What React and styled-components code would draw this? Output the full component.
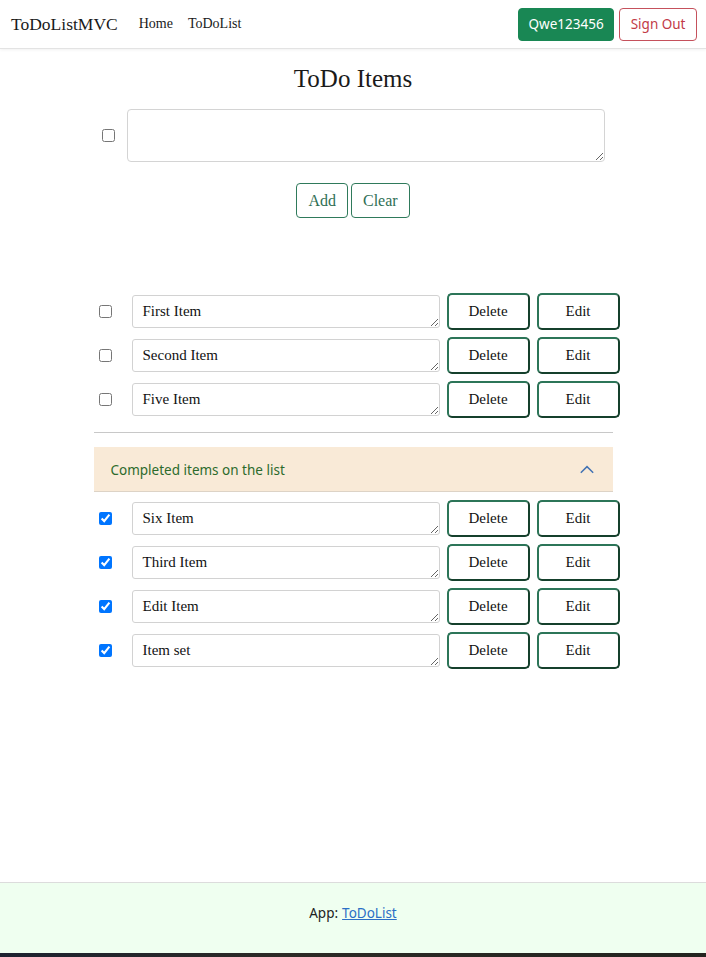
import styled, { createGlobalStyle } from "styled-components";

const GlobalStyle = createGlobalStyle`
  html, body {
    margin: 0;
    padding: 0;
    background: #fff;
  }
  body {
    font-family: "Liberation Serif", "Times New Roman", serif;
    color: #212529;
  }
`;

const Page = styled.div`
  min-height: 100vh;
  display: flex;
  flex-direction: column;
`;

const Navbar = styled.nav`
  height: 48px;
  display: flex;
  align-items: center;
  padding: 0 9px 0 11px;
  border-bottom: 1px solid #e3e3e3;
  box-shadow: 0 1px 3px rgba(0, 0, 0, 0.06);
`;

const Brand = styled.span`
  font-size: 17.5px;
  color: #1a1a1a;
  margin-right: 21px;
`;

const NavLink = styled.span`
  font-size: 14px;
  color: #1a1a1a;
  margin-right: 15px;
`;

const NavRight = styled.div`
  margin-left: auto;
  display: flex;
  gap: 5px;
`;

const NavButton = styled.button`
  height: 33px;
  padding: 0 ${(props) => (props.variant === "danger" ? "10.5px" : "9.5px")};
  border-radius: 4px;
  font-family: "Noto Sans", "Open Sans", sans-serif;
  font-size: 13.5px;
  border: 1px solid ${(props) => (props.variant === "danger" ? "#c5515c" : "#198754")};
  background: ${(props) => (props.variant === "danger" ? "#fff" : "#198754")};
  color: ${(props) => (props.variant === "danger" ? "#c23a47" : "#fff")};
`;

const Main = styled.main`
  flex: 1;
  width: 519px;
  margin: 0 auto;
  padding-bottom: 40px;
`;

const Title = styled.h1`
  font-weight: 400;
  font-size: 25px;
  text-align: center;
  margin: 16px 0 16px;
  color: #1a1a1a;
`;

const NewRow = styled.div`
  display: flex;
  align-items: center;
  padding-left: 8px;
  gap: 12px;
`;

const Check = styled.input.attrs({ type: "checkbox" })`
  width: 13px;
  height: 13px;
  margin: 0;
  flex-shrink: 0;
`;

const BigText = styled.textarea`
  width: 478px;
  height: 53px;
  box-sizing: border-box;
  border: 1px solid #d4d4d4;
  border-radius: 4px;
  font-family: inherit;
  font-size: 15px;
`;

const FormButtons = styled.div`
  display: flex;
  justify-content: center;
  gap: 3px;
  margin-top: 21px;
`;

const FormButton = styled.button`
  height: 35px;
  padding: 0 11px;
  background: #fff;
  border: 1px solid #2f7a5b;
  border-radius: 4px;
  color: #2f6f55;
  font-family: "Liberation Serif", serif;
  font-size: 16px;
`;

const List = styled.div`
  display: flex;
  flex-direction: column;
  gap: 7px;
  margin-top: ${(props) => props.top || "0"};
`;

const ItemRow = styled.div`
  display: flex;
  align-items: center;
  width: 526px;
  padding-left: 5px;
`;

const ItemText = styled.textarea`
  width: 308px;
  height: 33px;
  margin-left: 20px;
  box-sizing: border-box;
  border: 1px solid #d2d2d2;
  border-radius: 3px;
  padding: 7px 10px 5px;
  font-family: "Liberation Serif", serif;
  font-size: 15px;
  color: #111;
  overflow: hidden;
`;

const ItemButton = styled.button`
  width: 83px;
  height: 37px;
  margin-left: 7px;
  box-sizing: border-box;
  background: #fff;
  border: 2px solid;
  border-color: #2c7558 #15402c #15402c #2c7558;
  border-radius: 5px;
  font-family: "Liberation Serif", serif;
  font-size: 15px;
  color: #111;
`;

const Divider = styled.hr`
  border: none;
  border-top: 1px solid #c8c8c8;
  margin: 14px 0 14px;
`;

const AccordionHeader = styled.div`
  height: 45px;
  display: flex;
  align-items: center;
  justify-content: space-between;
  padding: 0 17px;
  background: #f9ead7;
  box-shadow: inset 0 -1px 0 #ddd3c6;
  font-family: "Noto Sans", "Open Sans", sans-serif;
  font-size: 13.5px;
  color: #2c6a2c;
  margin-bottom: 8px;
`;

const Footer = styled.footer`
  height: 71px;
  box-sizing: border-box;
  padding-top: 21px;
  display: flex;
  justify-content: center;
  background: #effff0;
  border-top: 1px solid #dcdcdc;
  font-family: "Noto Sans", "Open Sans", sans-serif;
  font-size: 13.5px;
  line-height: 19px;
  color: #222;
`;

const FooterLink = styled.a`
  color: #2b6fc6;
  text-decoration: underline;
  margin-left: 4px;
`;

const Strip = styled.div`
  height: 4px;
  background: linear-gradient(90deg, #1d2230, #2d2a26 40%, #23241f);
`;

const Chevron = () => (
  <svg width="18" height="18" viewBox="0 0 16 16" fill="none">
    <path d="M2.5 10.5 L8 5 L13.5 10.5" stroke="#4272b3" strokeWidth="1.3" />
  </svg>
);

const open = ["First Item", "Second Item", "Five Item"];
const done = ["Six Item", "Third Item", "Edit Item", "Item set"];

const Item = ({ text, checked }) => (
  <ItemRow>
    <Check defaultChecked={checked} />
    <ItemText defaultValue={text} />
    <ItemButton>Delete</ItemButton>
    <ItemButton>Edit</ItemButton>
  </ItemRow>
);

const App = () => {
  return (
    <Page>
      <GlobalStyle />
      <Navbar>
        <Brand>ToDoListMVC</Brand>
        <NavLink>Home</NavLink>
        <NavLink>ToDoList</NavLink>
        <NavRight>
          <NavButton>Qwe123456</NavButton>
          <NavButton variant="danger">Sign Out</NavButton>
        </NavRight>
      </Navbar>
      <Main>
        <Title>ToDo Items</Title>
        <NewRow>
          <Check />
          <BigText />
        </NewRow>
        <FormButtons>
          <FormButton>Add</FormButton>
          <FormButton>Clear</FormButton>
        </FormButtons>
        <List top="75px">
          {open.map((t) => (
            <Item key={t} text={t} />
          ))}
        </List>
        <Divider />
        <AccordionHeader>
          <span>Completed items on the list</span>
          <Chevron />
        </AccordionHeader>
        <List>
          {done.map((t) => (
            <Item key={t} text={t} checked />
          ))}
        </List>
      </Main>
      <Footer>
        App:<FooterLink href="#">ToDoList</FooterLink>
      </Footer>
      <Strip />
    </Page>
  );
};

export default App;
